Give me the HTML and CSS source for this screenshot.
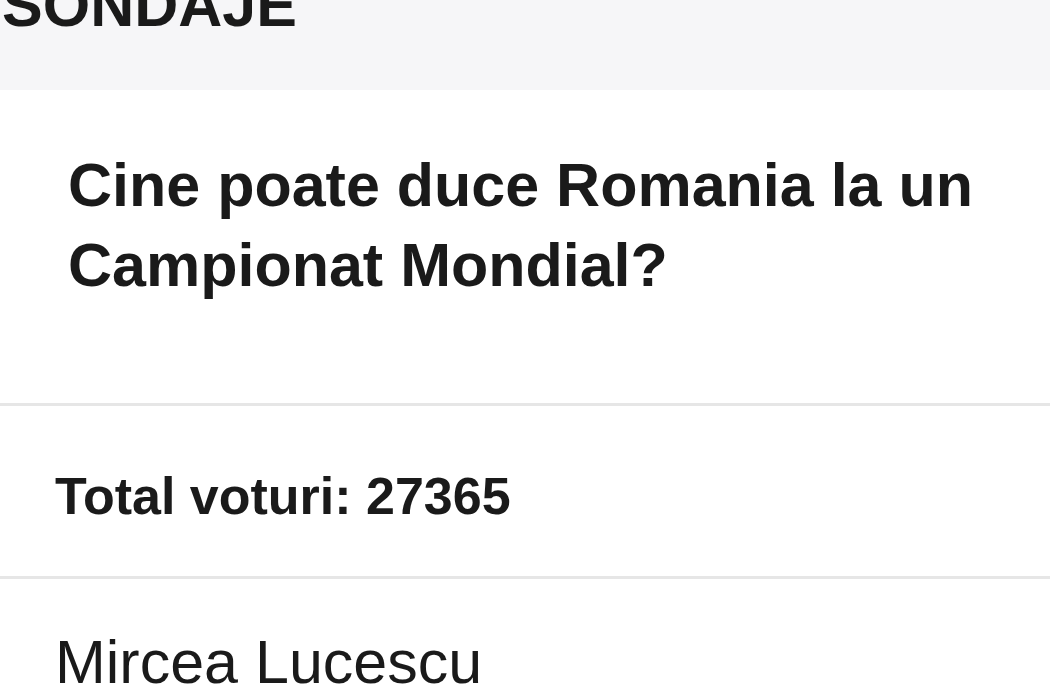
FILE: index.html
```html
<!DOCTYPE html>
<html lang="ro">
<head>
    <meta charset="UTF-8">
    <meta name="viewport" content="width=device-width, initial-scale=1.0">
    <title>Sondaje</title>
    <link rel="stylesheet" href="styles.css">
</head>
<body>
    <div class="poll">
        <!-- Section title band -->
        <div class="poll-header">
            <h2>SONDAJE</h2>
        </div>

        <div class="poll-question">Cine poate duce Romania la un Campionat Mondial?</div>

        <div class="poll-total">Total voturi: 27365</div>

        <!-- Answer options -->
        <div class="poll-option">Mircea Lucescu</div>
    </div>
</body>
</html>
```

FILE: styles.css
```css
/* Page reset */
html, body {
    margin: 0;
    padding: 0;
    background-color: #ffffff;
    overflow: hidden;
}

.poll {
    font-family: "Liberation Sans", Arial, sans-serif;
    color: #1a1a1a;
}

/* Light band holding the section title */
.poll-header {
    display: flow-root; /* keep the title's negative margin inside the band */
    height: 90px;
    background-color: #f6f6f8;
}

.poll-header h2 {
    margin: -25px 0 0 2px;
    font-size: 61px;
    line-height: 61px;
    font-weight: bold;
}

/* Question text */
.poll-question {
    padding: 55px 20px 98px 68px;
    font-size: 61px;
    line-height: 80px;
    font-weight: bold;
    border-bottom: 3px solid #e6e6e6;
}

/* Vote counter */
.poll-total {
    padding: 60px 20px 50px 55px;
    font-size: 52px;
    line-height: 60px;
    font-weight: bold;
    border-bottom: 3px solid #e6e6e6;
}

/* Single answer row */
.poll-option {
    padding: 48px 20px 20px 55px;
    font-size: 61px;
    line-height: 70px;
}
```
